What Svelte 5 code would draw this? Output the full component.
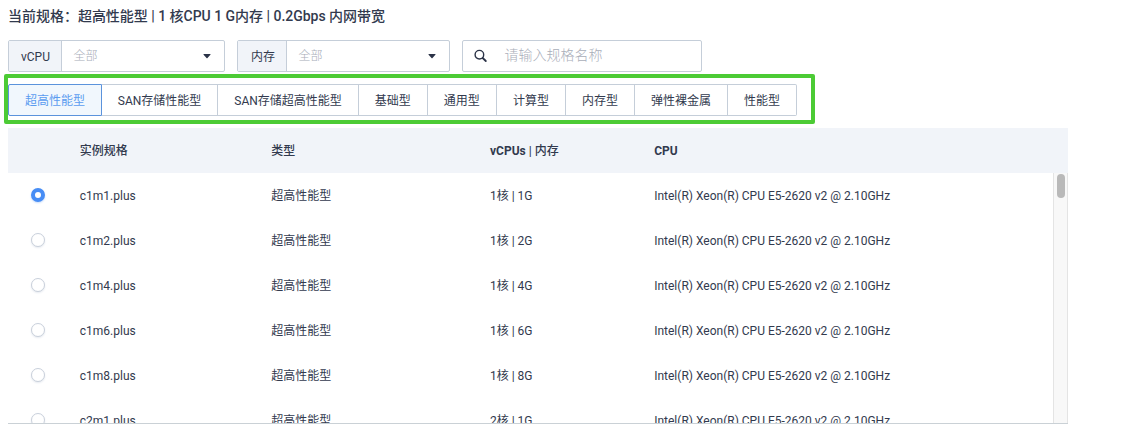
<script>
  const filters = [
    { label: 'vCPU', cls: 'cpu' },
    { label: '内存', cls: 'mem' }
  ];
  const tabs = ['超高性能型', 'SAN存储性能型', 'SAN存储超高性能型', '基础型', '通用型', '计算型', '内存型', '弹性裸金属', '性能型'];
  const rows = [
    ['c1m1.plus', '1核 | 1G'],
    ['c1m2.plus', '1核 | 2G'],
    ['c1m4.plus', '1核 | 4G'],
    ['c1m6.plus', '1核 | 6G'],
    ['c1m8.plus', '1核 | 8G'],
    ['c2m1.plus', '2核 | 1G']
  ];
  let active = $state(0);
  let selected = $state(0);
</script>

<main>
  <h1>当前规格：超高性能型 | 1 核CPU 1 G内存 | 0.2Gbps 内网带宽</h1>

  <div class="filters">
    {#each filters as f}
      <div class="select {f.cls}">
        <span class="label">{f.label}</span>
        <span class="value">全部</span>
        <svg class="caret" width="8" height="5" viewBox="0 0 8 5"><path d="M.9 0h6.2q.8.2.3.8L4.5 4q-.5.5-1 0L.6.8Q.1.2.9 0z" fill="#2b3347" /></svg>
      </div>
    {/each}
    <div class="search">
      <svg width="14" height="14" viewBox="0 0 14 14" fill="none" stroke="#2b3347" stroke-linecap="round">
        <circle cx="5.4" cy="5.7" r="4.3" stroke-width="1.4" />
        <path d="M8.7 9l3.1 3" stroke-width="1.8" />
      </svg>
      <span>请输入规格名称</span>
    </div>
  </div>

  <div class="highlight">
    <div class="tabs">
      {#each tabs as t, i}
        <button class:active={i === active} onclick={() => (active = i)}>{t}</button>
      {/each}
    </div>
  </div>

  <div class="table">
    <div class="row head">
      <span></span><span>实例规格</span><span>类型</span><span><b>vCPUs</b> | 内存</span><span><b>CPU</b></span>
    </div>
    <div class="body">
      <div class="rows">
        {#each rows as r, i}
          <div class="row">
            <span class="pick"><button class="radio" class:on={i === selected} aria-label={r[0]} onclick={() => (selected = i)}></button></span>
            <span>{r[0]}</span><span>超高性能型</span><span>{r[1]}</span><span>Intel(R) Xeon(R) CPU E5-2620 v2 @ 2.10GHz</span>
          </div>
        {/each}
      </div>
      <div class="track"><div class="thumb"></div></div>
    </div>
  </div>
</main>

<style>
  :global(body) { background: #fff; }
  main {
    box-sizing: border-box;
    width: 1139px;
    height: 437px;
    overflow: hidden;
    padding: 0 4px;
    font: 12px/20px Roboto, "Noto Sans CJK SC", sans-serif;
    color: #323a4e;
  }
  h1 {
    margin: 6px 4px 14px;
    font-size: 14px;
    line-height: 20px;
    font-weight: 500;
    letter-spacing: -0.02px;
    white-space: nowrap;
  }
  .filters { display: flex; margin-left: 4px; height: 32px; }
  .select, .search {
    box-sizing: border-box;
    display: flex;
    align-items: center;
    border: 1px solid #c5ced9;
    border-radius: 2px;
    height: 32px;
  }
  .select { margin-right: 12px; }
  .cpu { width: 217px; }
  .mem { width: 213px; }
  .label {
    box-sizing: border-box;
    height: 30px;
    line-height: 32px;
    padding-left: 12px;
    background: #f1f4f9;
    border-right: 1px solid #c5ced9;
    white-space: nowrap;
  }
  .cpu .label { width: 53px; }
  .mem .label { width: 49px; padding-left: 13px; }
  .value { flex: 1; padding-left: 11.5px; line-height: 32px; color: #a9aeb9; font-weight: 300; }
  .caret { margin-right: 13px; }
  .search { width: 240px; padding-left: 11px; }
  .search span { margin: -2px 0 0 16.5px; font-size: 14px; color: #a9aeb9; font-weight: 300; }
  .highlight {
    box-sizing: border-box;
    width: 811px;
    height: 50px;
    margin-top: 2px;
    border: 4px solid #4ccb35;
    border-radius: 2px;
    padding: 6px 0 0;
  }
  .tabs { display: flex; }
  button { font: inherit; color: inherit; }
  .tabs button {
    box-sizing: border-box;
    height: 32px;
    line-height: 30px;
    padding: 1px 16px 0;
    margin: 0;
    background: #fff;
    border: 1px solid #c5ced9;
    border-left: 0;
    white-space: nowrap;
  }
  .tabs button:nth-child(2) { padding-left: 15.8px; }
  .tabs button:last-child { border-radius: 0 2px 2px 0; }
  .tabs button.active {
    color: #5b9cf0;
    background: #f1f7fd;
    border: 1px solid #5b93dc;
    border-radius: 2px 0 0 2px;
  }
  .table { width: 1060px; margin: 4px 0 0 4px; border-bottom: 1px solid #cad1d6; }
  .row {
    display: grid;
    grid-template-columns: 71.8px 191.5px 218.7px 164.2px 1fr;
    height: 45px;
    align-items: center;
    white-space: nowrap;
  }
  .row > span { padding-top: 1px; }
  .head { background: #f1f4f9; font-weight: 500; }
  .head b { font-weight: 700; }
  .body { display: flex; height: 250px; overflow: hidden; }
  .rows { width: 1045px; }
  .row > .pick { display: flex; padding: 0 0 1px 23px; }
  .radio {
    box-sizing: border-box;
    width: 14px;
    height: 14px;
    padding: 0;
    border: 1px solid #c9d0db;
    border-radius: 50%;
    background: #fff;
    box-shadow: 0 1px 2px #e6eaf0;
  }
  .radio.on { border: 4px solid #478df5; box-shadow: 0 1px 2px #c8dcfa; }
  .track {
    box-sizing: border-box;
    width: 15px;
    background: #f8f8f8;
    border: solid #e4e4e4;
    border-width: 0 1px;
    padding: 1px 0 0 3px;
  }
  .thumb { width: 8px; height: 24px; border-radius: 4px; background: #b9b9b9; }
</style>
